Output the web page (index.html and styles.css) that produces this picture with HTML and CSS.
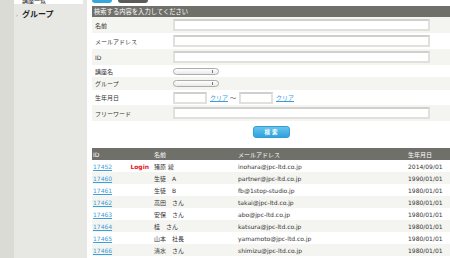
FILE: index.html
```html
<!DOCTYPE html>
<html lang="ja">
<head>
    <meta charset="UTF-8">
    <title>会員検索</title>
    <link rel="stylesheet" href="styles.css">
</head>
<body>

<div class="page">

    <!-- サイドメニュー -->
    <aside class="sidebar">
        <div class="menu-item cut"><span>講座一覧</span></div>
        <div class="menu-item"><span class="arrow">›</span>グループ</div>
    </aside>

    <main class="main">
        <div class="tabs">
            <span class="tab tab-blue"></span>
            <span class="tab tab-dark"></span>
        </div>

        <!-- 検索フォーム -->
        <div class="search-title">検索する内容を入力してください</div>
        <table class="search-form">
            <tr class="alt h16"><th>名前</th><td><input class="text" type="text"></td></tr>
            <tr class="h16"><th>メールアドレス</th><td><input class="text" type="text"></td></tr>
            <tr class="alt h16"><th>ID</th><td><input class="text" type="text"></td></tr>
            <tr class="h12"><th>講座名</th><td><div class="select"><span class="select-arrow"></span></div></td></tr>
            <tr class="alt h13"><th>グループ</th><td><div class="select"><span class="select-arrow"></span></div></td></tr>
            <tr class="h15"><th>生年月日</th>
                <td>
                    <div class="date-range">
                        <input class="text date" type="text">
                        <a href="#" class="link">クリア</a>
                        <span class="tilde">〜</span>
                        <input class="text date" type="text">
                        <a href="#" class="link">クリア</a>
                    </div>
                </td>
            </tr>
            <tr class="alt h16"><th>フリーワード</th><td><input class="text" type="text"></td></tr>
        </table>
        <div class="search-btn-row"><button class="search-btn">検 索</button></div>

        <!-- 検索結果 -->
        <table class="list">
            <tr>
                <th class="col-id">ID</th>
                <th class="col-name">名前</th>
                <th class="col-mail">メールアドレス</th>
                <th>生年月日</th>
            </tr>
            <tr>
                <td><div class="id-cell"><a href="#" class="link">17452</a><span class="login">Login</span></div></td>
                <td>猪原 綾</td><td>inohara@jpc-ltd.co.jp</td><td>2014/09/01</td>
            </tr>
            <tr><td><a href="#" class="link">17460</a></td><td>生徒　A</td><td>partner@jpc-ltd.co.jp</td><td>1990/01/01</td></tr>
            <tr><td><a href="#" class="link">17461</a></td><td>生徒　B</td><td>fb@1stop-studio.jp</td><td>1980/01/01</td></tr>
            <tr><td><a href="#" class="link">17462</a></td><td>高田　さん</td><td>takai@jpc-ltd.co.jp</td><td>1980/01/01</td></tr>
            <tr><td><a href="#" class="link">17463</a></td><td>安保　さん</td><td>abo@jpc-ltd.co.jp</td><td>1980/01/01</td></tr>
            <tr><td><a href="#" class="link">17464</a></td><td>桂　さん</td><td>katsura@jpc-ltd.co.jp</td><td>1980/01/01</td></tr>
            <tr><td><a href="#" class="link">17465</a></td><td>山本　社長</td><td>yamamoto@jpc-ltd.co.jp</td><td>1980/01/01</td></tr>
            <tr><td><a href="#" class="link">17466</a></td><td>清水　さん</td><td>shimizu@jpc-ltd.co.jp</td><td>1980/01/01</td></tr>
        </table>
    </main>

</div>

</body>
</html>
```

FILE: styles.css
```css
/* ベース */
body {
    margin: 0;
    width: 450px;
    height: 258px;
    overflow: hidden;
    font-family: "DejaVu Sans", "Noto Sans CJK JP", sans-serif;
    font-size: 6px;
    color: #333;
    background-color: #e7e7e3;
}

.page {
    display: flex;
    height: 258px;
}

/* サイドメニュー */
.sidebar {
    flex-shrink: 0;
    width: 69px;
    padding-right: 4px;
    border-left: 14px solid #dbdbd6;
    background-color: #e7e7e3;
}

.menu-item {
    padding: 6px 0 0 2px;
    font-size: 8px;
    font-weight: bold;
    line-height: 10px;
    color: #222;
}

.menu-item .arrow {
    display: inline-block;
    width: 6px;
    font-size: 5px;
    font-weight: normal;
    color: #888;
}

.menu-item.cut {
    height: 4px;
    padding: 0 0 0 8px;
    overflow: hidden;
    display: flex;
    align-items: flex-end;
    background-color: #fff;
    font-size: 6px;
    font-weight: normal;
}

.menu-item.cut span {
    line-height: 7px;
}

/* メイン */
.main {
    flex: 1;
    padding-left: 5px;
    background-color: #fff;
}

.tabs {
    display: flex;
    align-items: flex-end;
    gap: 6px;
    height: 3px;
    margin-bottom: 3px;
    overflow: hidden;
}

.tab {
    flex-shrink: 0;
    height: 10px;
    border-radius: 3px;
}

.tab-blue {
    width: 20px;
    background-color: #38a6de;
}

.tab-dark {
    width: 30px;
    background-color: #5b5b57;
}

.search-title {
    height: 11px;
    line-height: 11px;
    padding-left: 2px;
    font-size: 6.3px;
    color: #fff;
    background-color: #70706b;
}

.search-form {
    width: 100%;
    border-collapse: collapse;
}

.search-form th {
    width: 78px;
    padding: 0 0 0 3px;
    text-align: left;
    font-weight: normal;
    color: #333;
}

.search-form td {
    padding: 0;
}

.search-form tr.alt {
    background-color: #f4f4f0;
}

.h12 { height: 12px; }
.h13 { height: 13px; }
.h15 { height: 15px; }
.h16 { height: 16px; }

input.text {
    display: block;
    box-sizing: border-box;
    width: 257px;
    height: 12px;
    margin: 0;
    padding: 0;
    border: 2px solid #e0e0de;
    border-top-color: #cfcfcd;
    background-color: #fff;
}

.select {
    position: relative;
    box-sizing: border-box;
    width: 46px;
    height: 7px;
    border: 1px solid #acacac;
    border-radius: 4px;
    background: linear-gradient(#fff, #e9e9e9);
}

.select-arrow {
    position: absolute;
    right: 5px;
    top: 1px;
    width: 1px;
    height: 3px;
    background-color: #777;
}

.date-range {
    display: flex;
    align-items: center;
}

input.text.date {
    width: 34px;
}

.date-range .link {
    margin-left: 3px;
}

.tilde {
    margin: 0 3px 0 2px;
    color: #555;
}

.link {
    color: #3b9ddb;
    text-decoration: underline;
}

.search-btn-row {
    display: flex;
    justify-content: center;
    padding: 5px 0 10px;
}

.search-btn {
    width: 37px;
    height: 12px;
    padding: 0;
    border: 1px solid #2f9fd6;
    border-radius: 3px;
    background: linear-gradient(#66c4ee, #2ea3db);
    color: #fff;
    font-family: "DejaVu Sans", "Noto Sans CJK JP", sans-serif;
    font-size: 5.5px;
    font-weight: bold;
    line-height: 10px;
}

/* 一覧 */
.list {
    width: 100%;
    border-collapse: collapse;
}

.list th {
    height: 12px;
    padding: 0 0 0 1px;
    text-align: left;
    font-weight: normal;
    color: #fff;
    background-color: #70706b;
}

.list td {
    height: 12px;
    padding: 0 0 0 1px;
    white-space: nowrap;
}

.list tr:nth-child(odd) td {
    background-color: #f4f4f0;
}

.col-id { width: 60px; }
.col-name { width: 83px; }
.col-mail { width: 169px; }

.id-cell {
    display: flex;
    justify-content: space-between;
    padding-right: 4px;
}

.login {
    font-weight: bold;
    color: #e5141e;
}
```
